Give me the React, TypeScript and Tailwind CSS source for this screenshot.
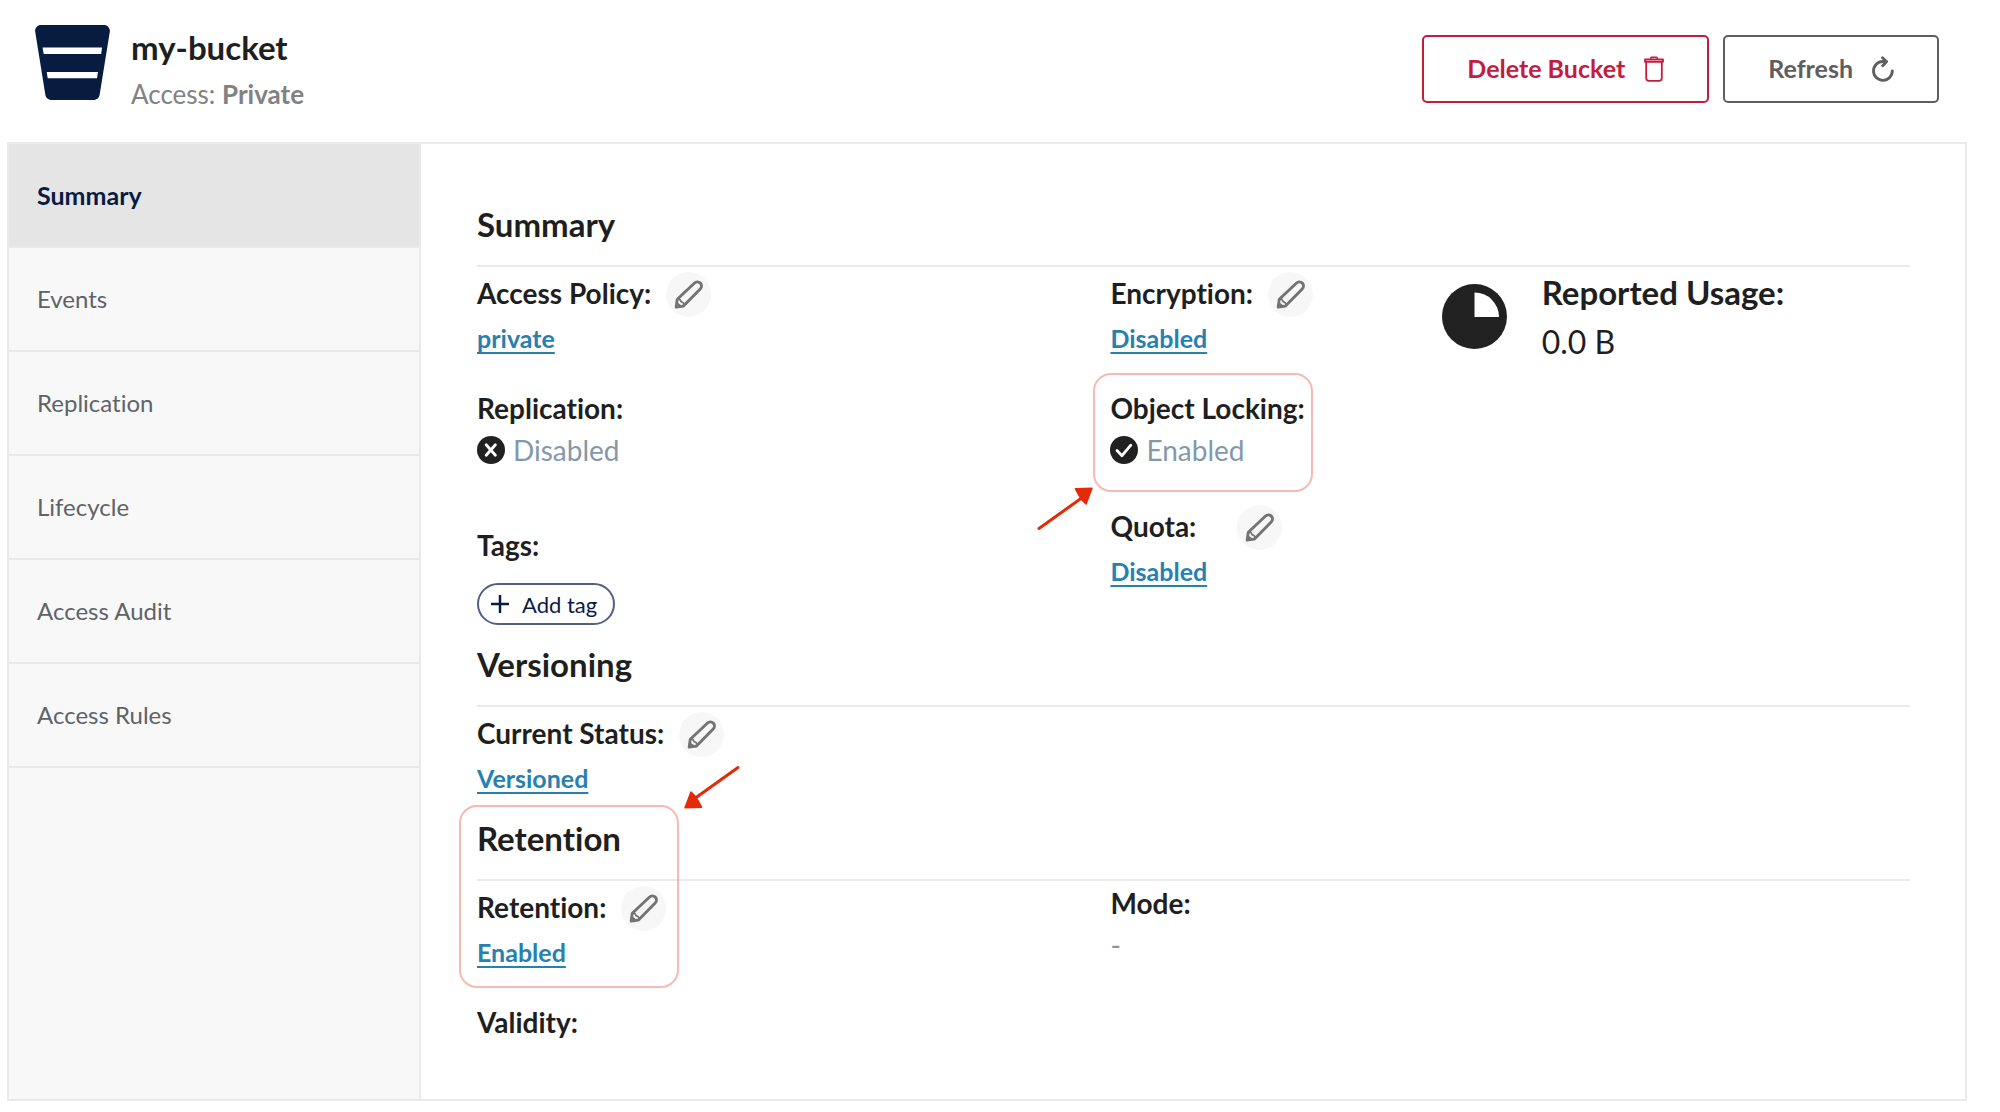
import type { ReactNode } from "react";

const tabs = ["Summary", "Events", "Replication", "Lifecycle", "Access Audit", "Access Rules"];

const columns = "grid grid-cols-[633fr_331fr_468fr]";

function BucketIcon() {
  return (
    <svg viewBox="0 0 75 75" className="h-[75px] w-[75px] shrink-0" aria-hidden="true">
      <path
        d="M6 0H69C72.600 0 75.300 3.200 74.800 6.800L64.700 69.500C64.200 72.700 61.700 75 58.500 75H16.500C13.300 75 10.800 72.700 10.300 69.500L.2 6.800C-.3 3.200 2.400 0 6 0Z"
        fill="#081c42"
      />
      <path d="M7.500 22.500H67L66.200 29H8.700Z M11.700 47H63L62 53.200H12.700Z" fill="#fff" />
    </svg>
  );
}

function TrashIcon() {
  return (
    <svg viewBox="0 0 20 26" className="h-[26px] w-5" fill="none" stroke="currentColor" aria-hidden="true">
      <path d="M1 3.500H19V5.800H1Z" strokeWidth="1.800" strokeLinejoin="round" />
      <path d="M6.500 3.200L7.200 1.300H12.800L13.500 3.200" strokeWidth="1.600" strokeLinejoin="round" />
      <path d="M2.200 6V22Q2.200 24.800 5 24.800H15Q17.800 24.800 17.800 22V6" strokeWidth="1.800" />
    </svg>
  );
}

function RefreshIcon() {
  return (
    <svg viewBox="0 0 22 26" className="h-[26px] w-[22px]" fill="none" stroke="currentColor" aria-hidden="true">
      <path d="M20.300 14.800A9.400 9.400 0 1 1 10.900 5.500H14" strokeWidth="2.800" strokeLinecap="round" />
      <path d="M10.500 1.700L14.600 5.500L10.700 9.800" strokeWidth="2.800" strokeLinecap="round" strokeLinejoin="round" />
    </svg>
  );
}

function EditButton({ label }: { label: string }) {
  return (
    <button
      type="button"
      aria-label={`Edit ${label}`}
      className="flex h-[45px] w-[45px] shrink-0 items-center justify-center rounded-full bg-[#f7f7f7] text-[#737373]"
    >
      <svg viewBox="0 0 45 45" className="h-[45px] w-[45px]" fill="none" aria-hidden="true">
        <path
          d="M10.200 35L11.300 27.300L28.300 11.200C30.100 9.500 32.700 9.500 34.300 11.100C35.900 12.700 35.900 15.200 34.200 17L17.500 34Z"
          stroke="currentColor"
          strokeWidth="2.900"
          strokeLinejoin="round"
        />
        <path d="M10.500 28.500L17.200 34.500L9.200 36.300Z" fill="currentColor" />
        <path d="M12.300 26.600Q14.500 27.600 15.200 29.700Q17.400 30.200 18.400 32.600" stroke="currentColor" strokeWidth="1.800" />
        <path d="M12.900 28.800L14 30.700L16.200 31.600L15.200 33.300L12.200 30.900Z" fill="#f7f7f7" />
      </svg>
    </button>
  );
}

function EditableField({ label, value }: { label: string; value: string }) {
  return (
    <div className="pt-[5px]">
      <div className="flex items-start gap-[15px]">
        <span className="min-w-[112px] text-[28px] leading-[42px] font-bold">{label}</span>
        <EditButton label={label.replace(":", "")} />
      </div>
      <a
        href="#"
        className="mt-[5px] block w-fit text-[25px] leading-8 font-bold text-[#2781b0] underline decoration-2 underline-offset-4"
      >
        {value}
      </a>
    </div>
  );
}

function Field({ label, children }: { label: string; children?: ReactNode }) {
  return (
    <div>
      <div className="text-[28px] leading-9 font-bold whitespace-nowrap">{label}</div>
      {children && (
        <div className="mt-1.5 flex items-center gap-2 text-[28px] leading-9 text-[#8399ab]">{children}</div>
      )}
    </div>
  );
}

function StatusIcon({ enabled }: { enabled: boolean }) {
  return (
    <svg viewBox="0 0 28 28" className="h-7 w-7 shrink-0" aria-hidden="true">
      <circle cx="14" cy="14" r="14" fill="#212121" />
      <path
        d={enabled ? "M7 14.500L12 19.700L20.800 9.200" : "M9.200 8.800L18.400 19.200M18.400 8.800L9.200 19.200"}
        fill="none"
        stroke="#fff"
        strokeWidth="2.800"
        strokeLinecap="round"
        strokeLinejoin="round"
      />
    </svg>
  );
}

function SectionTitle({ children }: { children: ReactNode }) {
  return (
    <h2 className="border-b-2 border-[#eaeaea] pb-[21px] text-[33px] leading-10 font-bold">{children}</h2>
  );
}

function Arrow({ className }: { className: string }) {
  return (
    <svg viewBox="0 0 56 44" className={className} aria-hidden="true">
      <path d="M2 41.500L46 10" stroke="#e42a07" strokeWidth="3" strokeLinecap="round" />
      <path
        d="M38.500 1.800L55 1.200L49 17L45 13L41.500 7.500Z"
        fill="#e42a07"
        stroke="#e42a07"
        strokeWidth="1.500"
        strokeLinejoin="round"
      />
    </svg>
  );
}

export default function App() {
  return (
    <div className="min-h-screen bg-white px-[7px] pb-2.5 font-[Lato,sans-serif] text-[#1f1f1f] [font-variant-ligatures:none]">
      <header className="flex h-[142px] items-start justify-between pr-[54px] pl-7">
        <div className="flex gap-[21px] pt-[25px]">
          <BucketIcon />
          <div>
            <h1 className="text-[33px] leading-[44px] font-bold">my-bucket</h1>
            <p className="text-[26px] leading-[50px] text-[#828282]">
              Access: <strong>Private</strong>
            </p>
          </div>
        </div>
        <div className="flex gap-3.5 pt-[35px] text-[25px] font-bold">
          <button
            type="button"
            className="flex h-[68px] items-center gap-[19px] rounded-[5px] border-2 border-[#c51b3f] px-[43px] text-[#c51b3f]"
          >
            Delete Bucket <TrashIcon />
          </button>
          <button
            type="button"
            className="flex h-[68px] items-center gap-[19px] rounded-[5px] border-2 border-[#5e5e5e] px-[43px] text-[#5e5e5e]"
          >
            Refresh <RefreshIcon />
          </button>
        </div>
      </header>

      <div className="mr-[26px] flex border-2 border-[#eaeaea]">
        <nav className="w-[412px] shrink-0 border-r-2 border-[#eaeaea] bg-[#f8f8f8]">
          {tabs.map((tab, i) => (
            <button
              key={tab}
              type="button"
              aria-current={i === 0 ? "page" : undefined}
              className={`flex w-full items-center border-b-2 border-[#eaeaea] px-7 py-[35px] text-left leading-8 ${
                i === 0 ? "bg-[#e5e5e5] text-[25px] font-bold text-[#081c42]" : "text-[24px] text-[#5f6368]"
              }`}
            >
              {tab}
            </button>
          ))}
        </nav>

        <main className="min-w-0 flex-1 pt-15 pr-[55px] pb-[59px] pl-14">
          <SectionTitle>Summary</SectionTitle>
          <div className={columns}>
            <div>
              <EditableField label="Access Policy:" value="private" />
              <div className="mt-9">
                <Field label="Replication:">
                  <StatusIcon enabled={false} /> Disabled
                </Field>
              </div>
              <div className="mt-[59px]">
                <Field label="Tags:" />
              </div>
              <button
                type="button"
                className="mt-5 flex h-[42px] items-center gap-3 rounded-full border-2 border-[#51617f] pr-4 pl-[11px] text-[22px] text-[#081c42]"
              >
                <svg viewBox="0 0 20 20" className="h-5 w-5" stroke="currentColor" strokeWidth="2.500" aria-hidden="true">
                  <path d="M10 1V19M1 10H19" />
                </svg>
                Add tag
              </button>
            </div>
            <div>
              <EditableField label="Encryption:" value="Disabled" />
              <div className="relative mt-9 w-fit">
                <Field label="Object Locking:">
                  <StatusIcon enabled /> Enabled
                </Field>
                <div className="pointer-events-none absolute -top-[17px] -right-2 -bottom-6 -left-[17px] rounded-[18px] border-2 border-[#f5a99f]/80" />
                <Arrow className="pointer-events-none absolute top-[97px] -left-[73px] h-11 w-14" />
              </div>
              <div className="mt-8">
                <EditableField label="Quota:" value="Disabled" />
              </div>
            </div>
            <div className="flex items-start gap-[35px] pt-[17px]">
              <svg viewBox="0 0 65 65" className="h-[65px] w-[65px] shrink-0" aria-hidden="true">
                <circle cx="32.500" cy="32.500" r="32.500" fill="#212121" />
                <path d="M32.500 8.500A24.500 24.500 0 0 1 57 33H32.500Z" fill="#fff" />
              </svg>
              <div className="-mt-[17px] leading-[50px]">
                <div className="text-[33px] font-bold whitespace-nowrap">Reported Usage:</div>
                <div className="text-[32px]">0.0 B</div>
              </div>
            </div>
          </div>

          <div className="mt-[19px]">
            <SectionTitle>Versioning</SectionTitle>
            <EditableField label="Current Status:" value="Versioned" />
          </div>

          <div className="relative mt-6">
            <SectionTitle>Retention</SectionTitle>
            <div className={columns}>
              <EditableField label="Retention:" value="Enabled" />
              <div className="pt-1">
                <Field label="Mode:">-</Field>
              </div>
            </div>
            <div className="pointer-events-none absolute -top-[13px] -left-[18px] h-[183px] w-[220px] rounded-[18px] border-2 border-[#f5a99f]/80" />
            <Arrow className="pointer-events-none absolute -top-[53px] left-[207px] h-11 w-14 rotate-180" />
          </div>
          <div className="mt-9">
            <Field label="Validity:" />
          </div>
        </main>
      </div>
    </div>
  );
}
